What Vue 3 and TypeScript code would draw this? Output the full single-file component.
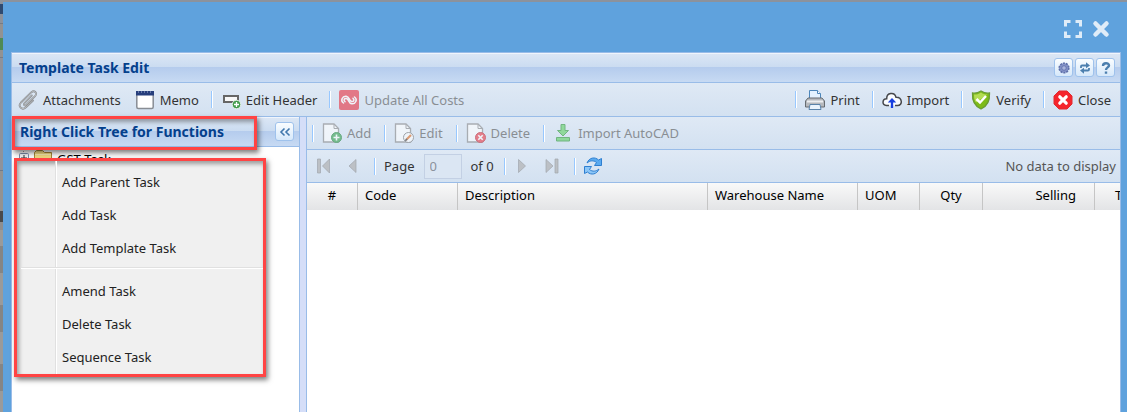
<script setup lang="ts">
import { ref } from 'vue'

interface Column {
  label: string
  kind: string
}

const columns: Column[] = [
  { label: '#', kind: 'c-num' },
  { label: 'Code', kind: 'c-code' },
  { label: 'Description', kind: 'c-desc' },
  { label: 'Warehouse Name', kind: 'c-wh' },
  { label: 'UOM', kind: 'c-uom' },
  { label: 'Qty', kind: 'c-qty' },
  { label: 'Selling', kind: 'c-sell' },
  { label: 'T', kind: 'c-total' },
]

const menuGroups: string[][] = [
  ['Add Parent Task', 'Add Task', 'Add Template Task'],
  ['Amend Task', 'Delete Task', 'Sequence Task'],
]

const page = ref('0')
</script>

<template>
  <div class="backdrop">
    <div class="modal">
      <div class="modal-tools">
        <button class="plain" aria-label="Maximize">
          <svg width="20" height="20" viewBox="0 0 20 20" fill="none" stroke="#dfecf8" stroke-width="3">
            <path d="M2.500 7.500V2.500H7.500M12.500 2.500H17.500V7.500M17.500 12.500V17.500H12.500M7.500 17.500H2.500V12.500" />
          </svg>
        </button>
        <button class="plain" aria-label="Close window">
          <svg width="18" height="18" viewBox="0 0 18 18" fill="none" stroke="#dfecf8" stroke-width="4.500">
            <path d="M3.500 3.500L14.500 14.500M14.500 3.500L3.500 14.500" stroke-linecap="round" />
          </svg>
        </button>
      </div>

      <main class="window">
        <header class="title-bar">
          <h1>Template Task Edit</h1>
          <button class="tool" aria-label="Settings">
            <svg width="12" height="12" viewBox="0 0 12 12">
              <circle cx="6" cy="6" r="4.800" fill="#8493c8" stroke="#5d6fa9" stroke-width="1.600" stroke-dasharray="2 1" />
              <circle cx="6" cy="6" r="2.300" fill="#a9b5dc" stroke="#6676b0" />
            </svg>
          </button>
          <button class="tool" aria-label="Refresh">
            <svg width="12" height="12" viewBox="0 0 12 12" fill="none" stroke="#4c7fae" stroke-width="1.800">
              <path d="M2 6V4.500Q2 3.500 3 3.500H7.500M10 6V7.500Q10 8.500 9 8.500H4.500" />
              <path d="M7 .3L11 3.500L7 6.200ZM5 5.800L1 8.500L5 11.700Z" fill="#4c7fae" stroke="none" />
            </svg>
          </button>
          <button class="tool" aria-label="Help">
            <svg width="12" height="12" viewBox="0 0 12 12" fill="none" stroke="#4c7fae" stroke-width="2.400">
              <path d="M3 4C3 .5 9 .5 9 3.500C9 5.500 6 5.300 6 8M6 9.400V11.800" />
            </svg>
          </button>
        </header>

        <div class="bar main-bar">
          <button class="item">
            <svg width="20" height="20" viewBox="0 0 20 20" fill="none" stroke-linecap="round">
              <path d="M13.800 5.500L6.500 13C5 14.700 6.800 16.300 8.300 14.900L16.800 6.500C20 3 16.500-.5 13.200 2.400L3 12.500C-.5 16.200 4 20.800 7.900 17.300L15 10.500" stroke="#85888b" stroke-width="1.800" />
              <path d="M13.800 5.500L6.500 13C5 14.700 6.800 16.300 8.300 14.900L16.800 6.500C20 3 16.500-.5 13.200 2.400L3 12.500C-.5 16.200 4 20.800 7.900 17.300L15 10.500" stroke="#d2d5d8" stroke-width=".7" />
            </svg>
            Attachments
          </button>
          <button class="item memo">
            <svg width="20" height="20" viewBox="0 0 20 20">
              <rect x="1.800" y="2" width="16.400" height="16.500" rx="1.500" fill="#fff" stroke="#888d94" stroke-width="1.500" />
              <path d="M1 1H19V5.500H1Z" fill="#263e7c" />
              <path d="M3 2H17" stroke="#a6b3d5" stroke-dasharray="1 2" />
            </svg>
            Memo
          </button>
          <i class="sep"></i>
          <button class="item">
            <svg width="20" height="20" viewBox="0 0 20 20">
              <rect x="3" y="6" width="14" height="6" fill="#f8f8f8" stroke="#666" stroke-width="2" />
              <circle cx="15.500" cy="14.500" r="4.300" fill="#419b4b" stroke="#e5f0e8" />
              <path d="M15.500 12V17M13 14.500H18" stroke="#fff" stroke-width="1.300" />
            </svg>
            Edit Header
          </button>
          <i class="sep"></i>
          <button class="item" disabled>
            <svg width="20" height="20" viewBox="0 0 20 20">
              <rect width="20" height="20" rx="2" fill="#e8303f" />
              <path d="M4.500 13C1 10.500 3.500 5.800 7.200 6.200C10.500 6.500 9.800 10.500 12.500 11.500C14.800 12 15.800 9.700 14 8.300M15.500 7C19 9.500 16.500 14.200 12.800 13.800C9.500 13.500 10.200 9.500 7.500 8.500C5.200 8 4.200 10.300 6 11.700" fill="none" stroke="#fff" stroke-width="1.500" stroke-linecap="round" />
            </svg>
            Update All Costs
          </button>
          <span class="fill"></span>
          <i class="sep"></i>
          <button class="item">
            <svg width="20" height="20" viewBox="0 0 20 20">
              <path d="M4.500 10V.5H12.500L15.500 3.500V10Z" fill="#e4f2ff" stroke="#4d86ba" />
              <path d="M12.500 .5V3.500H15.500" fill="#fff" stroke="#4d86ba" />
              <path d="M3 8H17L19.500 11V17H.5V11Z" fill="#b6b9bd" stroke="#666b70" />
              <path d="M2 11.500H18" stroke="#edeef0" stroke-width="2" />
              <path d="M5 14.500H15L16 19.500H4Z" fill="#eaf4fd" stroke="#5b84aa" />
            </svg>
            Print
          </button>
          <i class="sep"></i>
          <button class="item">
            <svg width="20" height="20" viewBox="0 0 20 20" fill="none">
              <path d="M7 15.500H4.500C-.5 15 .2 8.800 4.700 8.800C4.500 2.500 12.500 1.500 14 7.200C20.500 7 21 15.500 15.500 15.500H13" stroke="#45474b" stroke-width="1.500" fill="#fafcff" />
              <path d="M10 18V11" stroke="#173fe0" stroke-width="2.300" />
              <path d="M5.800 12.500L10 8L14.200 12.500Z" fill="#173fe0" />
            </svg>
            Import
          </button>
          <i class="sep"></i>
          <button class="item">
            <svg width="20" height="20" viewBox="0 0 20 20">
              <path d="M10 1C7 3 4 3.500 1.500 3C1 11 3.500 16 10 19C16.500 16 19 11 18.500 3C16 3.500 13 3 10 1Z" fill="#7dbb18" stroke="#6a9c35" stroke-width="1.300" />
              <path d="M10 2.500C7 4.500 5 4.700 3 4.500C3 8 3.500 10 5 12.500L16.500 4.500C14 4.600 12 4 10 2.500Z" fill="#b3dc52" />
              <path d="M5.500 9L9 12.500L15 6" fill="none" stroke="#fff" stroke-width="2.500" />
            </svg>
            Verify
          </button>
          <i class="sep"></i>
          <button class="item">
            <svg width="20" height="20" viewBox="0 0 20 20">
              <path d="M6 1H14L19 6V14L14 19H6L1 14V6Z" fill="#f5252c" stroke="#e02a30" stroke-linejoin="round" />
              <path d="M6.800 6.800L13.200 13.200M13.200 6.800L6.800 13.200" stroke="#fff" stroke-width="3.200" stroke-linecap="round" />
            </svg>
            Close
          </button>
        </div>

        <div class="columns">
          <aside class="tree-panel">
            <header class="tree-title">
              <h2>Right Click Tree for Functions</h2>
              <button class="tool" aria-label="Collapse panel">
                <svg width="12" height="12" viewBox="0 0 12 12" fill="none" stroke="#4278ad" stroke-width="1.600">
                  <path d="M5.500 2.500L2 6L5.500 9.500M10.500 2.500L7 6L10.500 9.500" />
                </svg>
              </button>
            </header>
            <div class="tree-row">
              <svg width="36" height="20" viewBox="0 0 36 20">
                <path d="M6.500 0V4" stroke="#999" stroke-dasharray="1 1" />
                <rect x="2.500" y="4.500" width="9" height="9" rx="1" fill="#f5f7fa" stroke="#7d8fae" />
                <path d="M4 9H10M7 6V12" stroke="#333" />
                <path d="M17.500 17.500V3.500L19.500 1.500H25.500L27.500 3.500H34.500V17.500Z" fill="#f5df83" stroke="#a98839" />
                <path d="M18 5.500H34" stroke="#fff3b8" />
              </svg>
              <span>GST Task</span>
            </div>
          </aside>

          <section class="grid-panel">
            <div class="bar grid-bar">
              <i class="sep"></i>
              <button class="item" disabled>
                <svg width="20" height="20" viewBox="0 0 20 20">
                  <path d="M1.500 1H12L16.500 5.500V19H1.500Z" fill="#fff" stroke="#888" stroke-width="1.300" />
                  <path d="M12 1V5.500H16.500" fill="none" stroke="#888" />
                  <circle cx="14.500" cy="14.500" r="5" fill="#36a34c" stroke="#1f8338" />
                  <path d="M14.500 11.500V17.500M11.500 14.500H17.500" stroke="#fff" stroke-width="1.600" />
                </svg>
                Add
              </button>
              <i class="sep"></i>
              <button class="item" disabled>
                <svg width="20" height="20" viewBox="0 0 20 20">
                  <path d="M1.500 1H12L16.500 5.500V19H1.500Z" fill="#fff" stroke="#888" stroke-width="1.300" />
                  <path d="M12 1V5.500H16.500" fill="none" stroke="#888" />
                  <circle cx="14.500" cy="14.500" r="5" fill="#fff" stroke="#777" />
                  <path d="M12 17L17 12" stroke="#df6c21" stroke-width="2.200" />
                  <path d="M11.300 17.700L13 16" stroke="#333" stroke-width="1.600" />
                </svg>
                Edit
              </button>
              <i class="sep"></i>
              <button class="item" disabled>
                <svg width="20" height="20" viewBox="0 0 20 20">
                  <path d="M1.500 1H12L16.500 5.500V19H1.500Z" fill="#fff" stroke="#888" stroke-width="1.300" />
                  <path d="M12 1V5.500H16.500" fill="none" stroke="#888" />
                  <circle cx="14.500" cy="14.500" r="5" fill="#ed3b46" stroke="#c22531" />
                  <path d="M12.300 12.300L16.700 16.700M16.700 12.300L12.300 16.700" stroke="#fff" stroke-width="1.600" />
                </svg>
                Delete
              </button>
              <i class="sep"></i>
              <button class="item" disabled>
                <svg width="20" height="20" viewBox="0 0 20 20">
                  <path d="M8 1.500H12V7.500H15.500L10 13L4.500 7.500H8Z" fill="#5fd262" stroke="#2e9637" />
                  <path d="M3.500 14.500H16.500V18H3.500Z" fill="#5fd262" stroke="#2e9637" />
                </svg>
                Import AutoCAD
              </button>
            </div>

            <div class="bar pager">
              <button class="nav" disabled aria-label="First page">
                <svg width="16" height="16" viewBox="0 0 16 16" fill="#bcc0c5" stroke="#a0a6ad" stroke-width=".7">
                  <path d="M1.500 1H4.500V15H1.500ZM13.500 1V15L6.500 8Z" />
                </svg>
              </button>
              <button class="nav" disabled aria-label="Previous page">
                <svg width="16" height="16" viewBox="0 0 16 16" fill="#bcc0c5" stroke="#a0a6ad" stroke-width=".7">
                  <path d="M12 1.500V14.500L5 8Z" />
                </svg>
              </button>
              <i class="sep"></i>
              <label for="page-number">Page</label>
              <input id="page-number" v-model="page" type="text" disabled />
              <span class="of">of 0</span>
              <i class="sep"></i>
              <button class="nav next" disabled aria-label="Next page">
                <svg width="16" height="16" viewBox="0 0 16 16" fill="#bcc0c5" stroke="#a0a6ad" stroke-width=".7">
                  <path d="M4.500 1.500V14.500L11.500 8Z" />
                </svg>
              </button>
              <button class="nav" disabled aria-label="Last page">
                <svg width="16" height="16" viewBox="0 0 16 16" fill="#bcc0c5" stroke="#a0a6ad" stroke-width=".7">
                  <path d="M11 1H14V15H11ZM2 1.500V14.500L9 8Z" />
                </svg>
              </button>
              <i class="sep"></i>
              <button class="refresh" aria-label="Refresh">
                <svg width="18" height="18" viewBox="0 0 18 18" stroke-linejoin="round">
                  <path d="M3 6C5 .5 11-.5 14.500 3L17.500 1.500V8.500H10.500L12.500 5.500C9.500 3 6 3.500 3 6Z" fill="#5aaaf0" stroke="#2f7fd0" />
                  <path d="M15 12C13 17.500 7 18.500 3.500 15L.5 16.500V9.500H7.500L5.500 12.500C8.500 15 12 14.500 15 12Z" fill="#8cc6f7" stroke="#2f7fd0" />
                </svg>
              </button>
              <span class="fill"></span>
              <span class="status">No data to display</span>
            </div>

            <div class="table-clip">
              <table>
                <thead>
                  <tr>
                    <th v-for="c in columns" :key="c.label" :class="c.kind" scope="col">{{ c.label }}</th>
                  </tr>
                </thead>
              </table>
            </div>
          </section>
        </div>
      </main>
    </div>

    <div class="marker title-marker"></div>
    <div class="marker menu-marker">
      <div class="menu" role="menu">
        <div v-for="(group, g) in menuGroups" :key="g" class="group">
          <button v-for="label in group" :key="label" role="menuitem">{{ label }}</button>
        </div>
      </div>
    </div>
  </div>
</template>

<style>
html,
body,
#app {
  height: 100%;
}
body {
  margin: 0;
  overflow: hidden;
}
</style>

<style scoped>
* {
  box-sizing: border-box;
}
.backdrop {
  position: relative;
  height: 100%;
  padding: 2px 0 0 3px;
  overflow: hidden;
  background: linear-gradient(
    #8c929c 0 4px, #2f4a70 4px 14px, #8c929c 14px 23px, #767b84 23px 24px, #929292 24px 38px,
    #4f8a55 38px 50px, #929292 50px 57px, #767b84 57px 58px, #8e929b 58px 170px, #6f7988 170px 171px,
    #929292 171px 211px, #4a4a4a 211px 222px, #8e8e8e 222px 230px, #9a9a9a 230px 246px,
    #858585 246px 273px, #9a9a9a 273px 305px, #858585 305px 332px, #9a9a9a 332px 364px,
    #858585 364px 391px, #9a9a9a 391px
  );
  font-family: 'Noto Sans', Tahoma, sans-serif;
  font-size: 13px;
  line-height: 20px;
  color: #333;
}
button {
  font: inherit;
  color: inherit;
  background: none;
  border: 0;
  padding: 0;
  margin: 0;
}
svg {
  display: block;
  flex: none;
}
.modal {
  height: 100%;
  display: flex;
  flex-direction: column;
  padding: 0 6px 0 8px;
  background: #5fa2dd;
}
.modal-tools {
  height: 50px;
  flex: none;
  display: flex;
  align-items: center;
  justify-content: flex-end;
  gap: 9px;
  padding: 3px 11px 0 0;
}
.window {
  flex: 1;
  min-height: 0;
  display: flex;
  flex-direction: column;
  border: 1px solid #99bce8;
  border-bottom: 0;
  background: #dfe9f6;
}
.title-bar,
.tree-title {
  flex: none;
  display: flex;
  align-items: center;
  height: 30px;
  background: linear-gradient(#dce7f5, #cbdcf1 48%, #b5cced 50%, #c7daf3);
  border-bottom: 1px solid #99bce8;
  box-shadow: inset 0 1px #f0f5fc;
}
.title-bar {
  padding: 0 5px 0 7px;
  gap: 2px;
}
h1,
h2 {
  flex: 1;
  margin: 0;
  font-size: 14px;
  font-weight: bold;
  color: #04408c;
  white-space: nowrap;
}
.tool {
  width: 19px;
  height: 19px;
  display: grid;
  place-items: center;
  border: 1px solid #9fc2ec;
  border-radius: 3px;
  background: linear-gradient(#fafdff, #d6e8fa);
}
.bar {
  flex: none;
  display: flex;
  align-items: center;
  height: 33px;
  background: linear-gradient(#dfe9f5, #d3e1f1);
  border-bottom: 1px solid #99bce8;
  white-space: nowrap;
}
.main-bar {
  height: 34px;
  padding: 0 9px 0 6px;
}
.item {
  display: flex;
  align-items: center;
  gap: 5px;
}
.item:disabled {
  opacity: 0.6;
  color: #555;
}
.sep {
  flex: none;
  width: 2px;
  height: 17px;
  margin: 0 8px 0 12px;
  border-left: 1px solid #98c8ff;
  border-right: 1px solid #fff;
}
.memo {
  margin-left: 14px;
}
.fill {
  flex: 1;
}
.columns {
  flex: 1;
  min-height: 0;
  display: flex;
  background: #d5def8;
}
.tree-panel {
  width: 288px;
  flex: none;
  background: #fff;
  border-right: 1px solid #99bce8;
}
.tree-title {
  padding: 0 5px 0 8px;
}
.tree-row {
  display: flex;
  gap: 4px;
  padding: 2px 0 0 5px;
  color: #000;
}
.grid-panel {
  flex: 1;
  min-width: 0;
  margin-left: 6px;
  border-left: 1px solid #99bce8;
  background: #fff;
}
.grid-bar .sep {
  margin-left: 13px;
}
.grid-bar .sep:first-child {
  margin-left: 5px;
}
.pager {
  padding: 0 4px 0 9px;
}
.nav {
  margin-right: 12px;
}
.nav + .sep {
  margin-left: 2px;
}
.nav.next {
  margin-right: 14px;
}
.pager label {
  margin-right: 9px;
}
.pager input {
  width: 38px;
  height: 25px;
  padding: 0 5px;
  border: 1px solid #c3d0e4;
  background: #dbe6f3;
  font: inherit;
  color: #8b929c;
}
.of {
  margin-left: 9px;
}
.of + .sep {
  margin-left: 10px;
}
.status {
  color: #555;
}
.table-clip {
  overflow: hidden;
}
table {
  width: 925px;
  table-layout: fixed;
  border-collapse: separate;
  border-spacing: 0;
}
th {
  height: 27px;
  padding: 0 7px 3px;
  font-weight: normal;
  color: #000;
  text-align: left;
  white-space: nowrap;
  background: linear-gradient(#f9f9f9, #e3e4e6);
  border-right: 1px solid #c5c5c5;
}
.c-num {
  width: 51px;
  text-align: center;
}
.c-code {
  width: 100px;
}
.c-desc {
  width: 250px;
}
.c-wh {
  width: 150px;
}
.c-uom {
  width: 62px;
}
.c-qty {
  width: 63px;
  text-align: center;
}
.c-sell {
  width: 112px;
  padding-right: 18px;
  text-align: right;
}
.c-total {
  padding-left: 20px;
}
/* Callouts that float over the panel */
.marker {
  position: absolute;
  border: 3px solid #ff4444;
  box-shadow: 2px 3px 5px rgba(0, 0, 0, 0.5), inset 2px 3px 4px rgba(0, 0, 0, 0.35);
}
.title-marker {
  left: 12px;
  top: 116px;
  width: 245px;
  height: 34px;
}
.menu-marker {
  left: 14px;
  top: 158px;
  width: 252px;
  background: #f0f0f0;
}
.menu {
  padding: 4px 0 1px;
  background: linear-gradient(#e0e0e0, #e0e0e0) 38px 0 / 1px 100% no-repeat,
    linear-gradient(#fff, #fff) 39px 0 / 1px 100% no-repeat;
}
.group button {
  display: block;
  width: 100%;
  height: 33px;
  padding-left: 45px;
  text-align: left;
  color: #222;
}
.group + .group {
  margin: 3px 0 0 4px;
  padding-top: 6px;
  border-top: 1px solid #e0e0e0;
  box-shadow: inset 0 1px #fff;
}
.group + .group button {
  padding-left: 41px;
}
</style>
